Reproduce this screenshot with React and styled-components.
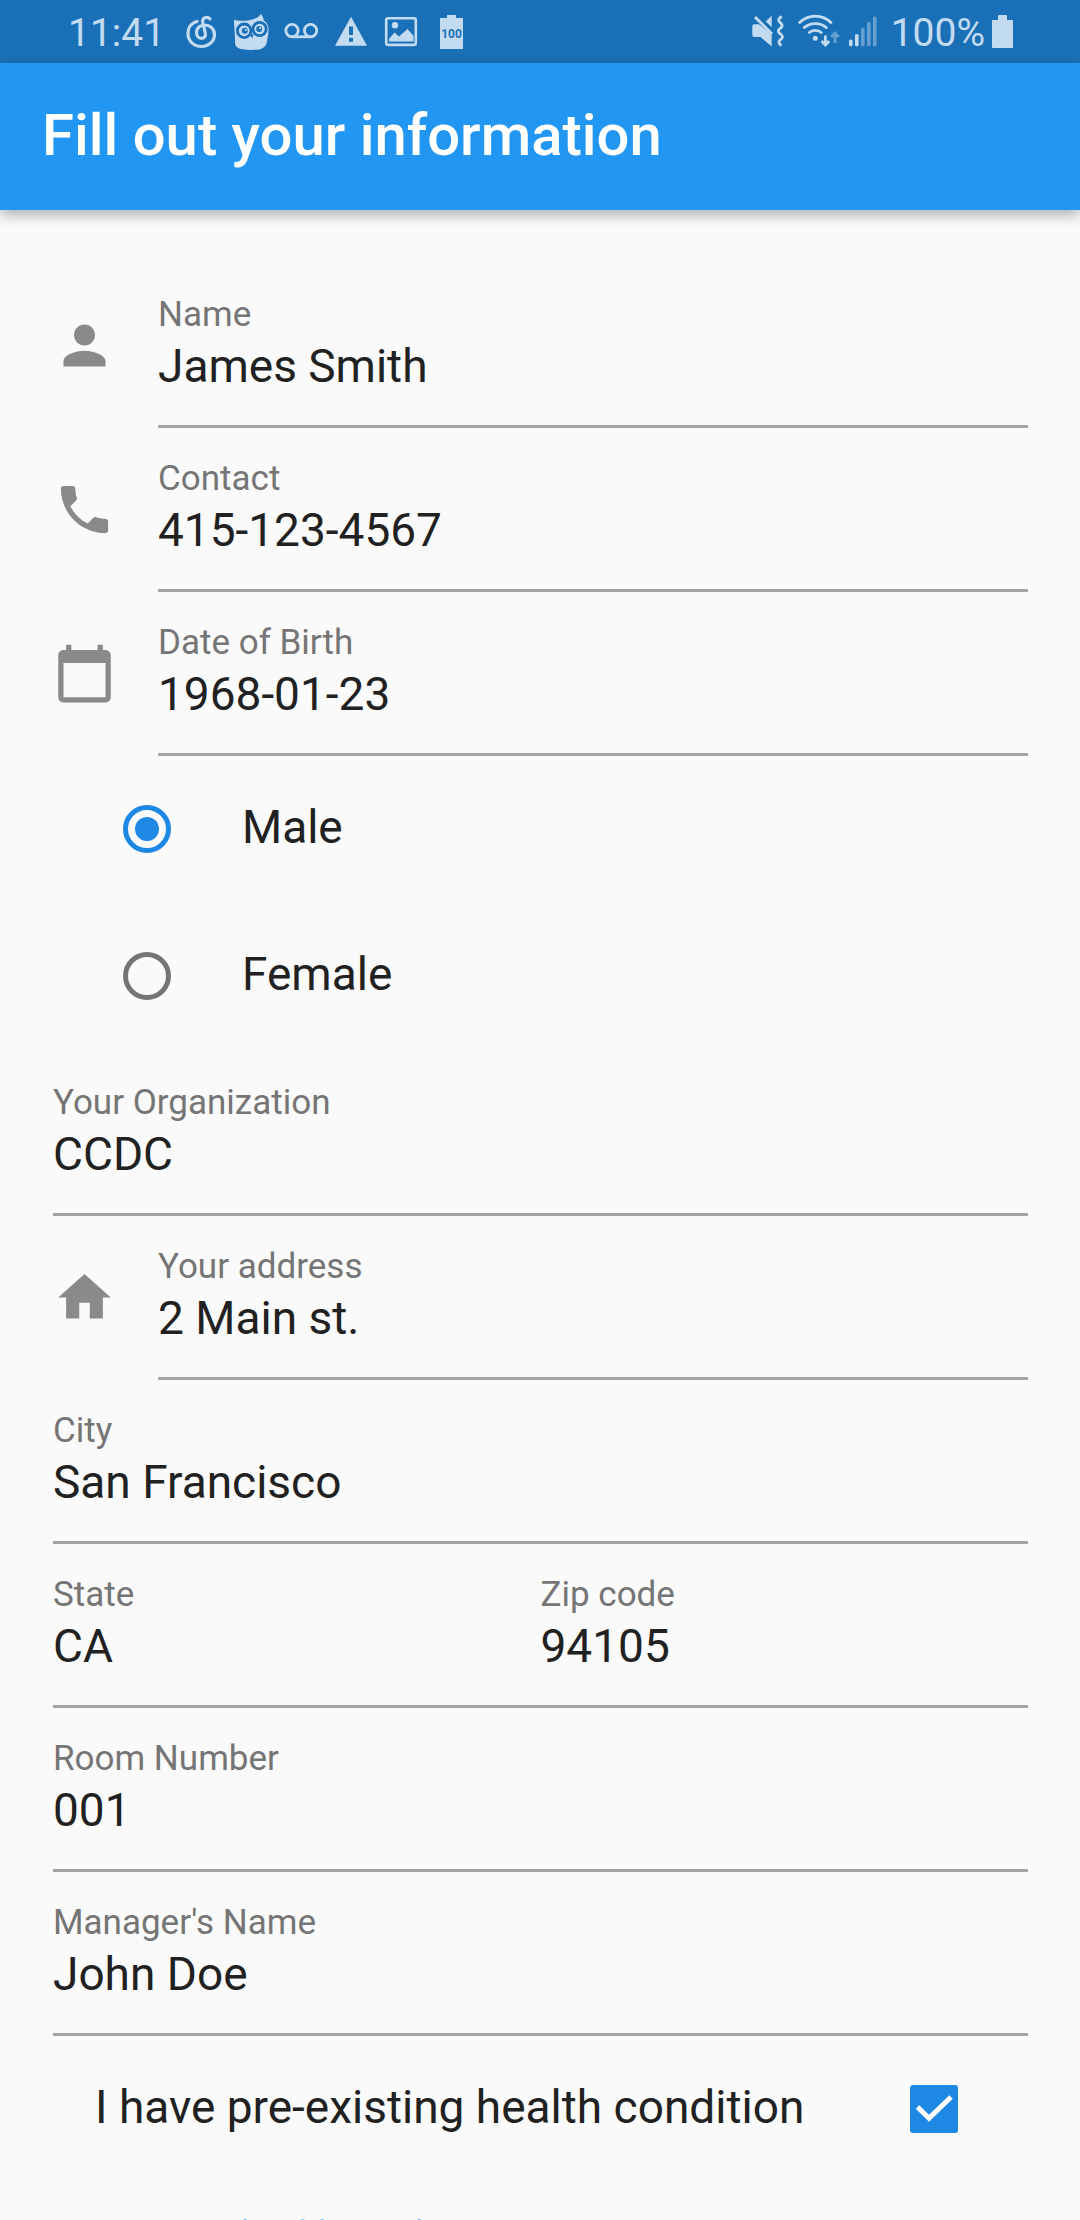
import React, { useState } from "react";
import styled, { createGlobalStyle } from "styled-components";

const GlobalStyle = createGlobalStyle`
  *, *::before, *::after { box-sizing: border-box; }
  body { margin: 0; background: #fafafa; }
  body, input { font-family: Roboto, "Noto Sans", sans-serif; }
`;

const BAR = "#1a70b7";
const INK = "#c3dbf0";

const Screen = styled.div`
  display: flex;
  flex-direction: column;
  height: 100vh;
  overflow: hidden;
  background: #fafafa;
  color: #212121;
`;

const StatusBar = styled.div`
  display: flex;
  flex: none;
  justify-content: space-between;
  align-items: center;
  height: 63px;
  padding: 3px 67px 0 68px;
  background: ${BAR};
  color: ${INK};
  font-size: 39px;
  line-height: 47px;
`;

const StatusGroup = styled.div`
  display: flex;
  align-items: center;
  gap: ${(p) => p.$gap}px;
`;

const Glyph = styled.svg`
  display: block;
  flex: none;
  width: ${(p) => p.$w}px;
  height: 42px;
  overflow: visible;
`;

const AppBar = styled.header`
  display: flex;
  flex: none;
  align-items: center;
  height: 147px;
  padding: 0 42px 3px;
  background: #2196f3;
  box-shadow: 0 5px 12px rgba(0, 0, 0, 0.3);
  z-index: 1;
`;

const Title = styled.h1`
  margin: 0;
  color: #fff;
  font-size: 58px;
  line-height: 68px;
  font-weight: 500;
`;

const Form = styled.form`
  flex: 1;
  min-height: 0;
  overflow-y: auto;
  scrollbar-width: none;
  padding: 54px 52px 54px 53px;
`;

const Row = styled.div`
  display: flex;
  gap: ${(p) => (p.$icon ? 42 : 0)}px;
  align-items: center;
`;

const FieldIcon = styled.svg`
  display: block;
  flex: none;
  width: 63px;
  height: 63px;
  margin-bottom: 2px;
  fill: #8a8a8a;
`;

const Field = styled.div`
  display: flex;
  flex: 1;
  flex-direction: column;
  gap: 4px;
  min-width: 0;
  padding: 30px 0 32px;
  border-bottom: 3px solid #a3a3a3;
`;

const Label = styled.label`
  color: ${(p) => (p.$active ? "#2196f3" : "#757575")};
  font-size: 35px;
  line-height: 41px;
`;

const TextInput = styled.input`
  width: 100%;
  height: 54px;
  padding: 0;
  border: 0;
  outline: 0;
  background: transparent;
  color: #212121;
  font-size: 46px;
  line-height: 54px;
`;

const RadioGroup = styled.fieldset`
  margin: 0;
  padding: 0 0 2px;
  border: 0;
`;

const Option = styled.label`
  display: flex;
  align-items: center;
  gap: 71px;
  height: 147px;
  padding: 0 70px 2px;
`;

const OptionText = styled.span`
  padding-bottom: 4px;
  font-size: 46px;
  line-height: 54px;
`;

const Radio = styled.input`
  appearance: none;
  display: grid;
  place-items: center;
  width: 48px;
  height: 48px;
  margin: 0;
  border: 5px solid #757575;
  border-radius: 50%;

  &:checked { border-color: #1e88e5; }
  &:checked::before {
    content: "";
    width: 24px;
    height: 24px;
    border-radius: 50%;
    background: #1e88e5;
  }
`;

const CheckRow = styled.label`
  display: flex;
  align-items: center;
  justify-content: space-between;
  height: 148px;
  padding: 0 70px 2px 42px;
`;

const CheckBox = styled.span`
  display: grid;
  width: 48px;
  height: 48px;

  & > * { grid-area: 1 / 1; }
`;

const Tick = styled.svg`
  width: 48px;
  height: 48px;
  pointer-events: none;
  fill: none;
  stroke: #fff;
  stroke-width: 5;
`;

const CheckInput = styled.input`
  appearance: none;
  width: 48px;
  height: 48px;
  margin: 0;
  border: 5px solid #757575;
  border-radius: 3px;

  &:checked { border: 0; background: #1e88e5; }
`;

const ICONS = {
  person:
    "M12 12c2.21 0 4-1.79 4-4s-1.79-4-4-4-4 1.79-4 4 1.79 4 4 4zm0 2c-2.67 0-8 1.34-8 4v2h16v-2c0-2.66-5.33-4-8-4z",
  phone:
    "M6.62 10.79c1.44 2.83 3.76 5.14 6.59 6.59l2.2-2.2c.27-.27.67-.36 1.02-.24 1.12.37 2.33.57 3.57.57.55 0 1 .45 1 1V20c0 .55-.45 1-1 1-9.39 0-17-7.61-17-17 0-.55.45-1 1-1h3.5c.55 0 1 .45 1 1 0 1.25.2 2.45.57 3.57.11.35.03.74-.25 1.02l-2.2 2.2z",
  calendar:
    "M20 3h-1V1h-2v2H7V1H5v2H4c-1.1 0-2 .9-2 2v16c0 1.1.9 2 2 2h16c1.1 0 2-.9 2-2V5c0-1.1-.9-2-2-2zm0 18H4V8h16v13z",
  home: "M10 20v-6h4v6h5v-8h3L12 3 2 12h3v8z",
  hospital:
    "M19 3H5c-1.1 0-2 .9-2 2v14c0 1.1.9 2 2 2h14c1.1 0 2-.9 2-2V5c0-1.1-.9-2-2-2zm-1 11h-4v4h-4v-4H6v-4h4V6h4v4h4v4z",
};

function TextField({ id, label, value, active, type = "text" }) {
  return (
    <Field>
      <Label htmlFor={id} $active={active}>{label}</Label>
      <TextInput id={id} type={type} defaultValue={value} />
    </Field>
  );
}

function FieldRow({ icon, ...field }) {
  return (
    <Row $icon={Boolean(icon)}>
      {icon && (
        <FieldIcon viewBox="0 0 24 24" aria-hidden="true">
          <path d={ICONS[icon]} />
        </FieldIcon>
      )}
      <TextField {...field} />
    </Row>
  );
}

function MusicGlyph() {
  return (
    <Glyph $w={32} viewBox="0 0 32 42" fill="none" stroke={INK} strokeWidth="3.2" strokeLinecap="round">
      <path d="M12 9.5C6 11 3 16 3 21.5C3 29 9 34.5 16.5 34.5C24 34.5 29.5 29 29.5 22.5C29.5 17 25 13 19.5 13C14.5 13 11.5 16.5 11.5 20.5C11.5 24 13.5 26.3 16.3 26.3C19.5 26.3 21 24 20.3 21L17.8 10.5C17 7 19.2 5.4 21.5 5.4C23 5.4 24 5.8 25 6.8" />
    </Glyph>
  );
}

function OwlGlyph() {
  return (
    <Glyph $w={36} viewBox="0 0 36 42" fill={INK}>
      <path d="M1 7.8C6 9.5 17 9 22 6.5Q26 5 28 2Q30 4 30.8 8.5Q35.5 12 35.5 17C35.5 23 34.5 26 34 29.5C33 36 28 37.8 22 37.8Q15 38.3 10 37.2C4 36.5 1.8 34 2 30C2.3 24 1 15 1 7.8Z" />
      <g stroke={BAR} strokeWidth="2.8">
        <circle cx="11.2" cy="18.8" r="6.8" />
        <circle cx="26.6" cy="17" r="6.6" />
      </g>
      <g fill={BAR}>
        <circle cx="11.8" cy="18.8" r="3" />
        <circle cx="26.2" cy="17" r="3" />
        <path d="M17 22.5L20.5 22L19.3 26.5Z" />
      </g>
      <circle cx="12.8" cy="18" r="1.1" />
      <circle cx="27.2" cy="16.2" r="1.1" />
    </Glyph>
  );
}

function VoicemailGlyph() {
  return (
    <Glyph $w={34} viewBox="0 0 34 42" fill="none" stroke={INK} strokeWidth="2.8">
      <circle cx="7" cy="18.6" r="6.2" />
      <circle cx="25.6" cy="18.6" r="6.2" />
      <path d="M7 24.8H25.6" />
    </Glyph>
  );
}

function WarningGlyph() {
  return (
    <Glyph $w={34} viewBox="0 0 34 42" fill={INK}>
      <path d="M16 4.8L32 33.8H0Z" />
      <path fill={BAR} d="M14 14.5h4V23h-4zM14 25.8h4v4h-4z" />
    </Glyph>
  );
}

function ImageGlyph() {
  return (
    <Glyph $w={34} viewBox="0 0 34 42" fill={INK}>
      <rect x="1.2" y="6.3" width="29.6" height="26.6" rx="2" fill="none" stroke={INK} strokeWidth="2.6" />
      <circle cx="10" cy="13.3" r="3.2" />
      <path d="M4 29.5V27L9.5 20.5L14 24.5L22.5 17L28.5 24V29.5Z" />
    </Glyph>
  );
}

const BatteryText = styled.text`
  font: 700 12px Roboto, sans-serif;
  fill: ${BAR};
`;

function BatteryLevelGlyph() {
  return (
    <Glyph $w={34} viewBox="0 0 34 42" fill={INK}>
      <path d="M12 3h9v3h7v31H5V6h7z" />
      <BatteryText x="16.5" y="26" textAnchor="middle">100</BatteryText>
    </Glyph>
  );
}

function MuteGlyph() {
  return (
    <Glyph $w={40} viewBox="0 0 40 42" fill={INK}>
      <path d="M4 12.2H9L21.7 22.5V34.5L10.5 25H4Q2.3 25 2.3 23.3V14Q2.3 12.2 4 12.2Z" />
      <path d="M5 5L22 22" fill="none" stroke={INK} strokeWidth="3" />
      <path d="M21.7 3.8V15.2L15.8 9.4Z" />
      <path
        d="M31.8 4.5Q26.5 7.5 30 10.5Q34.5 13.5 30 16.5Q26.5 19.5 30.5 22Q34.5 25 30.5 27.5Q27 30.5 31.5 33.5"
        fill="none" stroke={INK} strokeWidth="2.8"
      />
    </Glyph>
  );
}

function WifiGlyph() {
  return (
    <Glyph $w={42} viewBox="0 0 42 42" fill="none" stroke={INK} strokeWidth="2.8">
      <path d="M1.8 11.2Q9 4.2 18.3 4.2T34.8 11.2" />
      <path d="M6.4 16.2Q11.5 11.6 18.3 11.6T30.2 16.2" />
      <path d="M11.4 21.2Q14.5 18.4 18.3 18.4T25.2 21.2" />
      <circle cx="18.3" cy="26.2" r="2.5" fill={INK} stroke="none" />
      <path d="M28.4 23.5V33M24.6 29L28.4 33L32.2 29" />
      <path d="M38 31V21M34.2 25L38 21L41.8 25" opacity="0.45" />
    </Glyph>
  );
}

function SignalGlyph() {
  return (
    <Glyph $w={38} viewBox="0 0 38 42" fill={INK}>
      <rect x="3" y="27.5" width="3.6" height="6.8" rx="1.6" />
      <rect x="9" y="22" width="3.6" height="12.3" rx="1.6" />
      <g opacity="0.45">
        <rect x="15" y="16" width="3.6" height="18.3" rx="1.6" />
        <rect x="21" y="10" width="3.6" height="24.3" rx="1.6" />
        <rect x="27" y="4.5" width="3.6" height="29.8" rx="1.6" />
      </g>
    </Glyph>
  );
}

function BatteryGlyph() {
  return (
    <Glyph $w={21} viewBox="0 0 21 42" fill={INK}>
      <path d="M6 4Q6 3 7 3H14Q15 3 15 4V8H20Q21 8 21 9V35Q21 36 20 36H1Q0 36 0 35V9Q0 8 1 8H6Z" />
    </Glyph>
  );
}

export default function App() {
  const [gender, setGender] = useState("Male");
  const [condition, setCondition] = useState(true);

  return (
    <Screen>
      <GlobalStyle />
      <StatusBar>
        <StatusGroup $gap={20}>
          <span>11:41</span>
          <StatusGroup $gap={16}>
            <MusicGlyph />
            <OwlGlyph />
            <VoicemailGlyph />
            <WarningGlyph />
            <ImageGlyph />
            <BatteryLevelGlyph />
          </StatusGroup>
        </StatusGroup>
        <StatusGroup $gap={7}>
          <MuteGlyph />
          <WifiGlyph />
          <SignalGlyph />
          <span>100%</span>
          <BatteryGlyph />
        </StatusGroup>
      </StatusBar>
      <AppBar>
        <Title>Fill out your information</Title>
      </AppBar>
      <Form>
        <FieldRow icon="person" id="name" label="Name" value="James Smith" />
        <FieldRow icon="phone" id="contact" label="Contact" value="415-123-4567" type="tel" />
        <FieldRow icon="calendar" id="birth" label="Date of Birth" value="1968-01-23" />
        <RadioGroup aria-label="Gender">
          {["Male", "Female"].map((g) => (
            <Option key={g}>
              <Radio type="radio" name="gender" checked={gender === g} onChange={() => setGender(g)} />
              <OptionText>{g}</OptionText>
            </Option>
          ))}
        </RadioGroup>
        <FieldRow id="organization" label="Your Organization" value="CCDC" />
        <FieldRow icon="home" id="address" label="Your address" value="2 Main st." />
        <FieldRow id="city" label="City" value="San Francisco" />
        <Row>
          <TextField id="state" label="State" value="CA" />
          <TextField id="zip" label="Zip code" value="94105" />
        </Row>
        <FieldRow id="room" label="Room Number" value="001" />
        <FieldRow id="manager" label="Manager's Name" value="John Doe" />
        <CheckRow>
          <OptionText>I have pre-existing health condition</OptionText>
          <CheckBox>
            <CheckInput
              type="checkbox"
              checked={condition}
              onChange={(e) => setCondition(e.target.checked)}
            />
            {condition && (
              <Tick viewBox="0 0 48 48" aria-hidden="true">
                <path d="M7.5 22L19 33.2L41 12" />
              </Tick>
            )}
          </CheckBox>
        </CheckRow>
        <FieldRow icon="hospital" id="details" label="Type health condition" value="" active />
      </Form>
    </Screen>
  );
}
